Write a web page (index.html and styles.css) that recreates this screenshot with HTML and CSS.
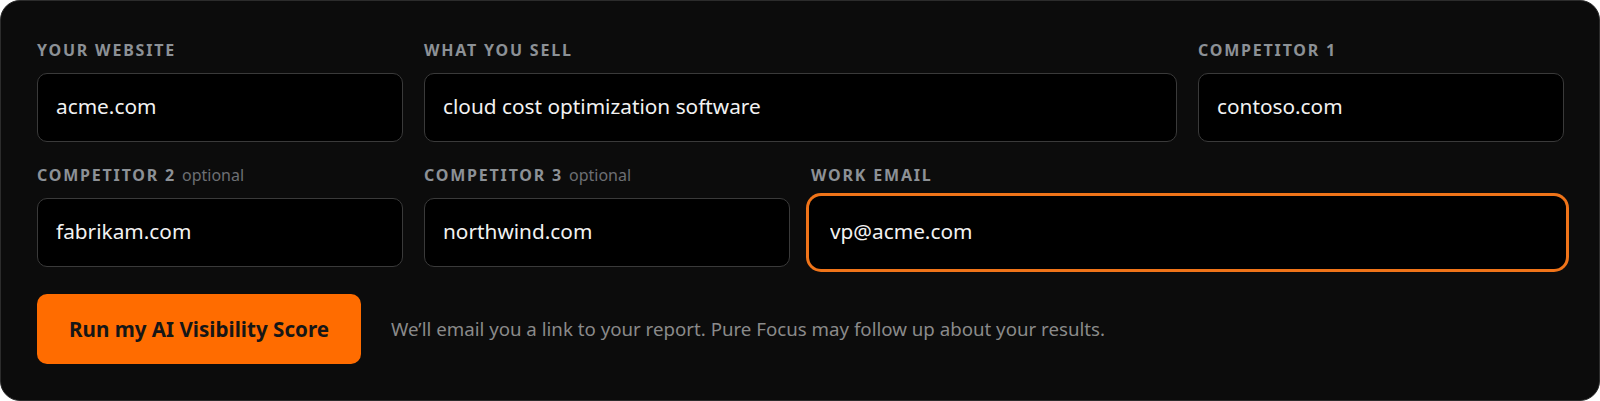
FILE: index.html
```html
<!DOCTYPE html>
<html lang="en">
<head>
<meta charset="utf-8">
<title>AI Visibility Score</title>
<link rel="stylesheet" href="styles.css">
</head>
<body>
<form class="card">
  <div class="fields">
    <label class="field">
      <span class="label">Your website</span>
      <input class="input" type="text" value="acme.com">
    </label>
    <label class="field span-2">
      <span class="label">What you sell</span>
      <input class="input" type="text" value="cloud cost optimization software">
    </label>
    <label class="field">
      <span class="label">Competitor 1</span>
      <input class="input" type="text" value="contoso.com">
    </label>
    <label class="field">
      <span class="label">Competitor 2 <span class="optional">optional</span></span>
      <input class="input" type="text" value="fabrikam.com">
    </label>
    <label class="field">
      <span class="label">Competitor 3 <span class="optional">optional</span></span>
      <input class="input" type="text" value="northwind.com">
    </label>
    <label class="field span-2">
      <span class="label">Work email</span>
      <input class="input input-focus" type="email" value="vp@acme.com">
    </label>
  </div>
  <div class="actions">
    <button class="btn" type="button">Run my AI Visibility Score</button>
    <p class="note">We’ll email you a link to your report. Pure Focus may follow up about your results.</p>
  </div>
</form>
</body>
</html>
```

FILE: styles.css
```css
* { box-sizing: border-box; }

html, body {
  margin: 0;
  padding: 0;
  background: #ffffff;
}

body {
  font-family: "Noto Sans", "Open Sans", sans-serif;
}

.card {
  width: 1600px;
  height: 401px;
  margin: 0;
  padding: 39px 35px 0 36px;
  background: #0c0c0c;
  border: 1px solid #2c2c2c;
  border-radius: 20px;
}

.fields {
  display: grid;
  grid-template-columns: repeat(4, 1fr);
  column-gap: 21px;
  row-gap: 23px;
}

.field {
  display: flex;
  flex-direction: column;
  gap: 13px;
}

.span-2 { grid-column: span 2; }

.label {
  font-size: 16px;
  line-height: 20px;
  font-weight: 700;
  letter-spacing: 1.8px;
  text-transform: uppercase;
  color: #8c9196;
  white-space: nowrap;
}

.optional {
  font-weight: 400;
  text-transform: none;
  letter-spacing: 0;
  color: #6c6f73;
  margin-left: 0;
}

.input {
  height: 69px;
  width: 100%;
  padding: 0 18px 3px;
  background: #000000;
  border: 1px solid #3a3a3a;
  border-radius: 10px;
  color: #f2f2f2;
  font-family: inherit;
  font-size: 20.8px;
  outline: none;
}

.input-focus {
  border-color: #000000;
  box-shadow: 0 0 0 2px #000000, 0 0 0 5px #f07419;
}

.actions {
  display: flex;
  align-items: center;
  gap: 30px;
  margin-top: 27px;
}

.btn {
  width: 324px;
  height: 70px;
  padding: 0;
  border: none;
  border-radius: 10px;
  background: #ff6c00;
  color: #161616;
  font-family: inherit;
  font-size: 20.6px;
  font-weight: 700;
}

.note {
  margin: 0 0 2px;
  font-size: 18.7px;
  color: #8a8a8a;
}
```
